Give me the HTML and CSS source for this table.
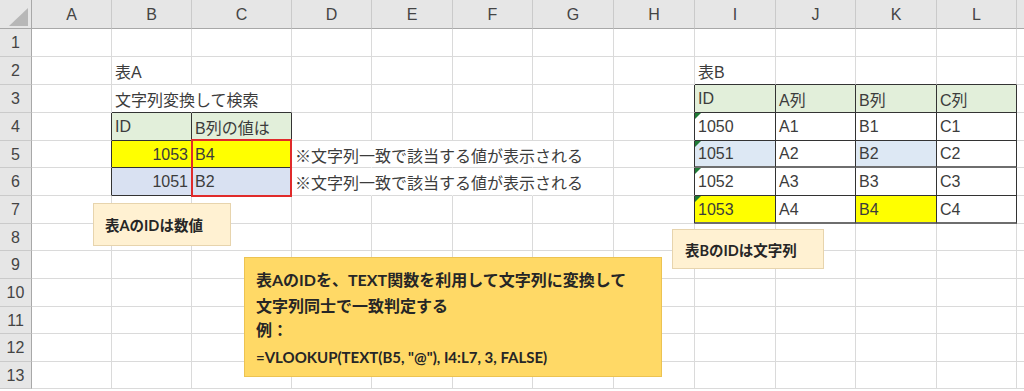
FILE: index.html
```html
<!DOCTYPE html>
<html lang="ja">
<head>
<meta charset="utf-8">
<title>表A / 表B VLOOKUP</title>
<link rel="stylesheet" href="styles.css">
</head>
<body>
<div class="sheet">
  <div class="grid">
    <!-- header row -->
    <div class="corner"><svg width="32" height="29" viewBox="0 0 32 29"><polygon points="28,8 28,26 9,26" fill="#b7b7b7"/></svg></div>
    <div class="ch">A</div><div class="ch">B</div><div class="ch">C</div><div class="ch">D</div><div class="ch">E</div><div class="ch">F</div><div class="ch">G</div><div class="ch">H</div><div class="ch">I</div><div class="ch">J</div><div class="ch">K</div><div class="ch">L</div><div class="ch fill"></div>

    <!-- row 1 -->
    <div class="rh">1</div>
    <div class="c"></div><div class="c"></div><div class="c"></div><div class="c"></div><div class="c"></div><div class="c"></div><div class="c"></div><div class="c"></div><div class="c"></div><div class="c"></div><div class="c"></div><div class="c"></div><div class="c fill"></div>

    <!-- row 2 -->
    <div class="rh">2</div>
    <div class="c"></div><div class="c">表A</div><div class="c"></div><div class="c"></div><div class="c"></div><div class="c"></div><div class="c"></div><div class="c"></div><div class="c db">表B</div><div class="c db"></div><div class="c db"></div><div class="c db"></div><div class="c fill"></div>

    <!-- row 3 -->
    <div class="rh">3</div>
    <div class="c"></div><div class="c nr db">文字列変換して検索</div><div class="c db"></div><div class="c"></div><div class="c"></div><div class="c"></div><div class="c"></div><div class="c dr"></div><div class="c tb hd">ID</div><div class="c tb hd">A列</div><div class="c tb hd">B列</div><div class="c tb hd">C列</div><div class="c fill"></div>

    <!-- row 4 -->
    <div class="rh">4</div>
    <div class="c dr"></div><div class="c tb hd">ID</div><div class="c tb hd">B列の値は</div><div class="c"></div><div class="c"></div><div class="c"></div><div class="c"></div><div class="c dr"></div><div class="c tb err">1050</div><div class="c tb">A1</div><div class="c tb">B1</div><div class="c tb">C1</div><div class="c fill"></div>

    <!-- row 5 -->
    <div class="rh">5</div>
    <div class="c dr"></div><div class="c tb yel num">1053</div><div class="c tb yel">B4</div><div class="c nr">※文字列一致で該当する値が表示される</div><div class="c nr"></div><div class="c nr"></div><div class="c"></div><div class="c dr"></div><div class="c tb blu err gb">1051</div><div class="c tb gb">A2</div><div class="c tb blu gb">B2</div><div class="c tb gb">C2</div><div class="c fill"></div>

    <!-- row 6 -->
    <div class="rh">6</div>
    <div class="c dr"></div><div class="c tb lav num">1051</div><div class="c tb lav">B2</div><div class="c nr">※文字列一致で該当する値が表示される</div><div class="c nr"></div><div class="c nr"></div><div class="c"></div><div class="c dr"></div><div class="c tb err">1052</div><div class="c tb">A3</div><div class="c tb">B3</div><div class="c tb">C3</div><div class="c fill"></div>

    <!-- row 7 -->
    <div class="rh">7</div>
    <div class="c"></div><div class="c"></div><div class="c"></div><div class="c"></div><div class="c"></div><div class="c"></div><div class="c"></div><div class="c dr"></div><div class="c tb yel err gb">1053</div><div class="c tb gb">A4</div><div class="c tb yel gb">B4</div><div class="c tb gb">C4</div><div class="c fill"></div>

    <!-- rows 8-13 -->
    <div class="rh">8</div>
    <div class="c"></div><div class="c"></div><div class="c"></div><div class="c"></div><div class="c"></div><div class="c"></div><div class="c"></div><div class="c"></div><div class="c"></div><div class="c"></div><div class="c"></div><div class="c"></div><div class="c fill"></div>
    <div class="rh">9</div>
    <div class="c"></div><div class="c"></div><div class="c"></div><div class="c"></div><div class="c"></div><div class="c"></div><div class="c"></div><div class="c"></div><div class="c"></div><div class="c"></div><div class="c"></div><div class="c"></div><div class="c fill"></div>
    <div class="rh">10</div>
    <div class="c"></div><div class="c"></div><div class="c"></div><div class="c"></div><div class="c"></div><div class="c"></div><div class="c"></div><div class="c"></div><div class="c"></div><div class="c"></div><div class="c"></div><div class="c"></div><div class="c fill"></div>
    <div class="rh">11</div>
    <div class="c"></div><div class="c"></div><div class="c"></div><div class="c"></div><div class="c"></div><div class="c"></div><div class="c"></div><div class="c"></div><div class="c"></div><div class="c"></div><div class="c"></div><div class="c"></div><div class="c fill"></div>
    <div class="rh">12</div>
    <div class="c"></div><div class="c"></div><div class="c"></div><div class="c"></div><div class="c"></div><div class="c"></div><div class="c"></div><div class="c"></div><div class="c"></div><div class="c"></div><div class="c"></div><div class="c"></div><div class="c fill"></div>
    <div class="rh">13</div>
    <div class="c"></div><div class="c"></div><div class="c"></div><div class="c"></div><div class="c"></div><div class="c"></div><div class="c"></div><div class="c"></div><div class="c"></div><div class="c"></div><div class="c"></div><div class="c"></div><div class="c fill"></div>
  </div>

  <div class="redbox"></div>

  <div class="note note-a">表AのIDは数値</div>
  <div class="note note-b">表BのIDは文字列</div>

  <div class="formula">
    <div class="fl l1">表AのIDを、TEXT関数を利用して文字列に変換して</div>
    <div class="fl l2">文字列同士で一致判定する</div>
    <div class="fl l3">例：</div>
    <div class="fl l4">=VLOOKUP(TEXT(B5, "@"), I4:L7, 3, FALSE)</div>
  </div>
</div>
</body>
</html>
```

FILE: styles.css
```css
html, body {
  margin: 0;
  padding: 0;
  background: #ffffff;
}

.sheet {
  position: relative;
  width: 1024px;
  height: 391px;
  overflow: hidden;
  font-family: "Liberation Sans", "Noto Sans CJK JP", sans-serif;
  font-size: 16px;
  color: #3c3c3c;
}

.grid {
  display: grid;
  grid-template-columns: 32px 80px 80px 100px 80px 81px 80px 81px 81px 81px 80px 81px 80px 1fr;
  grid-template-rows: 29px 28px 28px 28px 28px 27px 28px 28px 27px 28px 28px 27px 28px 27px 1fr;
  height: 391px;
}

.grid > div {
  box-sizing: border-box;
}

.corner {
  background: #e6e6e6;
  border-right: 1px solid #a8a8a8;
  border-bottom: 1px solid #a8a8a8;
}
.corner svg { display: block; }

.ch {
  background: #e6e6e6;
  border-right: 1px solid #cacaca;
  border-bottom: 1px solid #a8a8a8;
  display: flex;
  align-items: center;
  justify-content: center;
  color: #444444;
  padding-top: 1px;
}

.rh {
  background: #e6e6e6;
  border-right: 1px solid #a8a8a8;
  border-bottom: 1px solid #cacaca;
  display: flex;
  align-items: center;
  justify-content: center;
  color: #444444;
  padding-top: 1px;
}

.c {
  position: relative;
  border-right: 1px solid #dadada;
  border-bottom: 1px solid #dadada;
  display: flex;
  align-items: center;
  padding: 1px 3px 0 3px;
  white-space: nowrap;
  overflow: visible;
}

.c.fill, .ch.fill { border-right: none; }

.nr { border-right-color: transparent !important; }
.db { border-bottom: 1px solid #333333 !important; }
.dr { border-right: 1px solid #333333 !important; }

.tb {
  border-right: 1px solid #333333;
  border-bottom: 1px solid #333333;
}
.gb { border-bottom: 2px solid #6e6e6e; }

.hd { background: #e2efda; }
.yel { background: #ffff00; }
.blu { background: #dde8f4; }
.lav { background: #d9e1f2; }
.num { justify-content: flex-end; }

.err::before {
  content: "";
  position: absolute;
  left: 0;
  top: 0;
  border-top: 6px solid #1f7a36;
  border-right: 6px solid transparent;
}

.redbox {
  position: absolute;
  left: 191px;
  top: 139px;
  width: 97px;
  height: 54px;
  border: 2px solid #e02a2a;
}

.note {
  position: absolute;
  box-sizing: border-box;
  background: #fff1d2;
  border: 1px solid #e7d4ad;
  font-family: "Lato", "Noto Sans CJK JP", sans-serif;
  font-weight: 700;
  font-size: 14.5px;
  color: #262626;
  display: flex;
  align-items: center;
}
.note-a {
  left: 93px;
  top: 203px;
  width: 138px;
  height: 43px;
  padding-left: 11px;
}
.note-b {
  left: 672px;
  top: 229px;
  width: 152px;
  height: 40px;
  padding-left: 12px;
}

.formula {
  position: absolute;
  box-sizing: border-box;
  left: 244px;
  top: 257px;
  width: 418px;
  height: 120px;
  background: #ffd966;
  border: 1px solid #ecc352;
  padding: 8px 0 0 11px;
  font-family: "Lato", "Noto Sans CJK JP", sans-serif;
  font-weight: 700;
  font-size: 16px;
  color: #262626;
  display: flex;
  flex-direction: column;
}
.fl {
  display: flex;
  align-items: center;
  white-space: nowrap;
}
.l1 { height: 26px; }
.l2 { height: 26px; }
.l3 { height: 22px; }
.l4 { height: 34px; font-size: 15px; }
```
